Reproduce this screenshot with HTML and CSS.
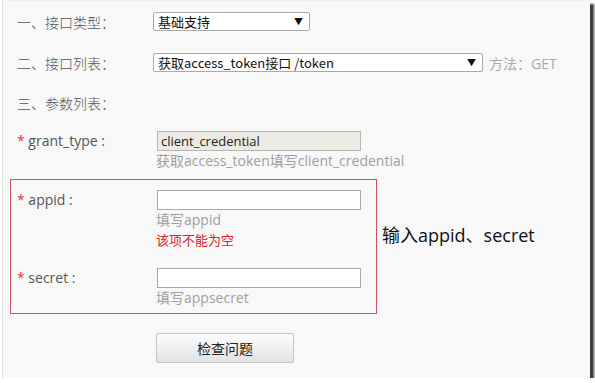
FILE: index.html
```html
<!DOCTYPE html>
<html lang="zh-CN">
<head>
    <meta charset="UTF-8">
    <title>接口调试</title>
    <link rel="stylesheet" href="styles.css">
</head>
<body>
    <div class="frame">
        <div class="row row-type">
            <span class="label">一、接口类型：</span>
            <div class="select select-short"><span>基础支持</span><i class="arrow">▼</i></div>
        </div>

        <div class="row row-api">
            <span class="label">二、接口列表：</span>
            <div class="select select-long"><span>获取access_token接口 /token</span><i class="arrow">▼</i></div>
            <span class="method">方法：GET</span>
        </div>

        <div class="row row-params">
            <span class="label">三、参数列表：</span>
        </div>

        <!-- grant_type -->
        <div class="param param-grant">
            <span class="plabel"><em>*</em> grant_type :</span>
            <div class="field">
                <div class="input input-disabled">client_credential</div>
                <div class="hint">获取access_token填写client_credential</div>
            </div>
        </div>

        <div class="boxwrap">
            <div class="redbox">
                <div class="param">
                    <span class="plabel"><em>*</em> appid :</span>
                    <div class="field">
                        <div class="input"></div>
                        <div class="hint">填写appid</div>
                        <div class="error">该项不能为空</div>
                    </div>
                </div>
                <div class="param param-secret">
                    <span class="plabel"><em>*</em> secret :</span>
                    <div class="field">
                        <div class="input"></div>
                        <div class="hint">填写appsecret</div>
                    </div>
                </div>
            </div>
            <div class="note">输入appid、secret</div>
        </div>

        <div class="actions">
            <button class="btn">检查问题</button>
        </div>
    </div>
</body>
</html>
```

FILE: styles.css
```css
body {
    margin: 0;
    padding: 0;
    background-color: #fff;
    font-family: "Open Sans", "Noto Sans CJK SC", sans-serif;
    color: #444;
}
.frame {
    width: 580px;
    height: 377px;
    background-color: #f8f8f8;
    border-left: 1px solid #ddd;
    border-top: 1px solid #f0f0f0;
    margin-left: 2px;
    box-shadow: 4px 4px 2px #3a3a3a;
    padding-left: 7px;
    font-size: 13px;
}
.row {
    display: flex;
    align-items: center;
    height: 19px;
    padding-left: 7px;
}
.row-type {
    margin-top: 11px;
}
.row-api {
    margin-top: 22px;
}
.row-params {
    margin-top: 21px;
}
.label {
    width: 136px;
    color: #555;
    font-size: 14px;
    font-family: "Noto Sans CJK SC", sans-serif;
    font-weight: 300;
}
.select {
    display: flex;
    align-items: center;
    justify-content: space-between;
    box-sizing: border-box;
    height: 19px;
    padding: 0 6px 0 4px;
    background: #fff;
    border: 1px solid #a9a9a9;
    border-radius: 2px;
    font-family: "Noto Sans CJK SC", sans-serif;
    font-size: 13px;
    color: #111;
}
.select-short {
    width: 157px;
}
.select-long {
    width: 330px;
}
.arrow {
    font-style: normal;
    font-size: 9px;
    color: #111;
}
.method {
    margin-left: 6px;
    color: #aaa;
    font-size: 14px;
}
.param {
    display: flex;
    align-items: flex-start;
    padding-left: 6px;
}
.param-grant {
    margin-top: 19px;
    padding-left: 7px;
}
.plabel {
    width: 140px;
    line-height: 20px;
    font-size: 14px;
    color: #555;
}
.plabel em {
    font-style: normal;
    color: #e4393c;
}
.field {
    display: flex;
    flex-direction: column;
}
.input {
    box-sizing: border-box;
    width: 204px;
    height: 20px;
    border: 1px solid #a9a9a9;
    background: #fff;
    padding: 0 3px;
    line-height: 18px;
    font-size: 13px;
    color: #222;
}
.input-disabled {
    background: #ebebe4;
    border-color: #b5b5b5;
}
.hint {
    line-height: 20px;
    font-size: 14px;
    color: #a0a0a0;
    margin-left: -1px;
}
.error {
    line-height: 20px;
    font-size: 13px;
    color: #e0202a;
    margin-left: -1px;
}
.boxwrap {
    display: flex;
    align-items: flex-start;
    margin-top: 8px;
}
.redbox {
    box-sizing: border-box;
    width: 367px;
    height: 135px;
    border: 1px solid #d84a5e;
    padding-top: 10px;
}
.param-secret {
    margin-top: 18px;
}
.note {
    margin-left: 5px;
    margin-top: 42px;
    font-size: 18px;
    color: #111;
}
.actions {
    padding-left: 146px;
    margin-top: 19px;
}
.btn {
    width: 138px;
    height: 30px;
    border: 1px solid #c4c4c4;
    border-radius: 2px;
    background: linear-gradient(#fdfdfd, #e2e2e2);
    font-family: "Noto Sans CJK SC", sans-serif;
    font-size: 14px;
    color: #222;
    padding: 0;
}
```
